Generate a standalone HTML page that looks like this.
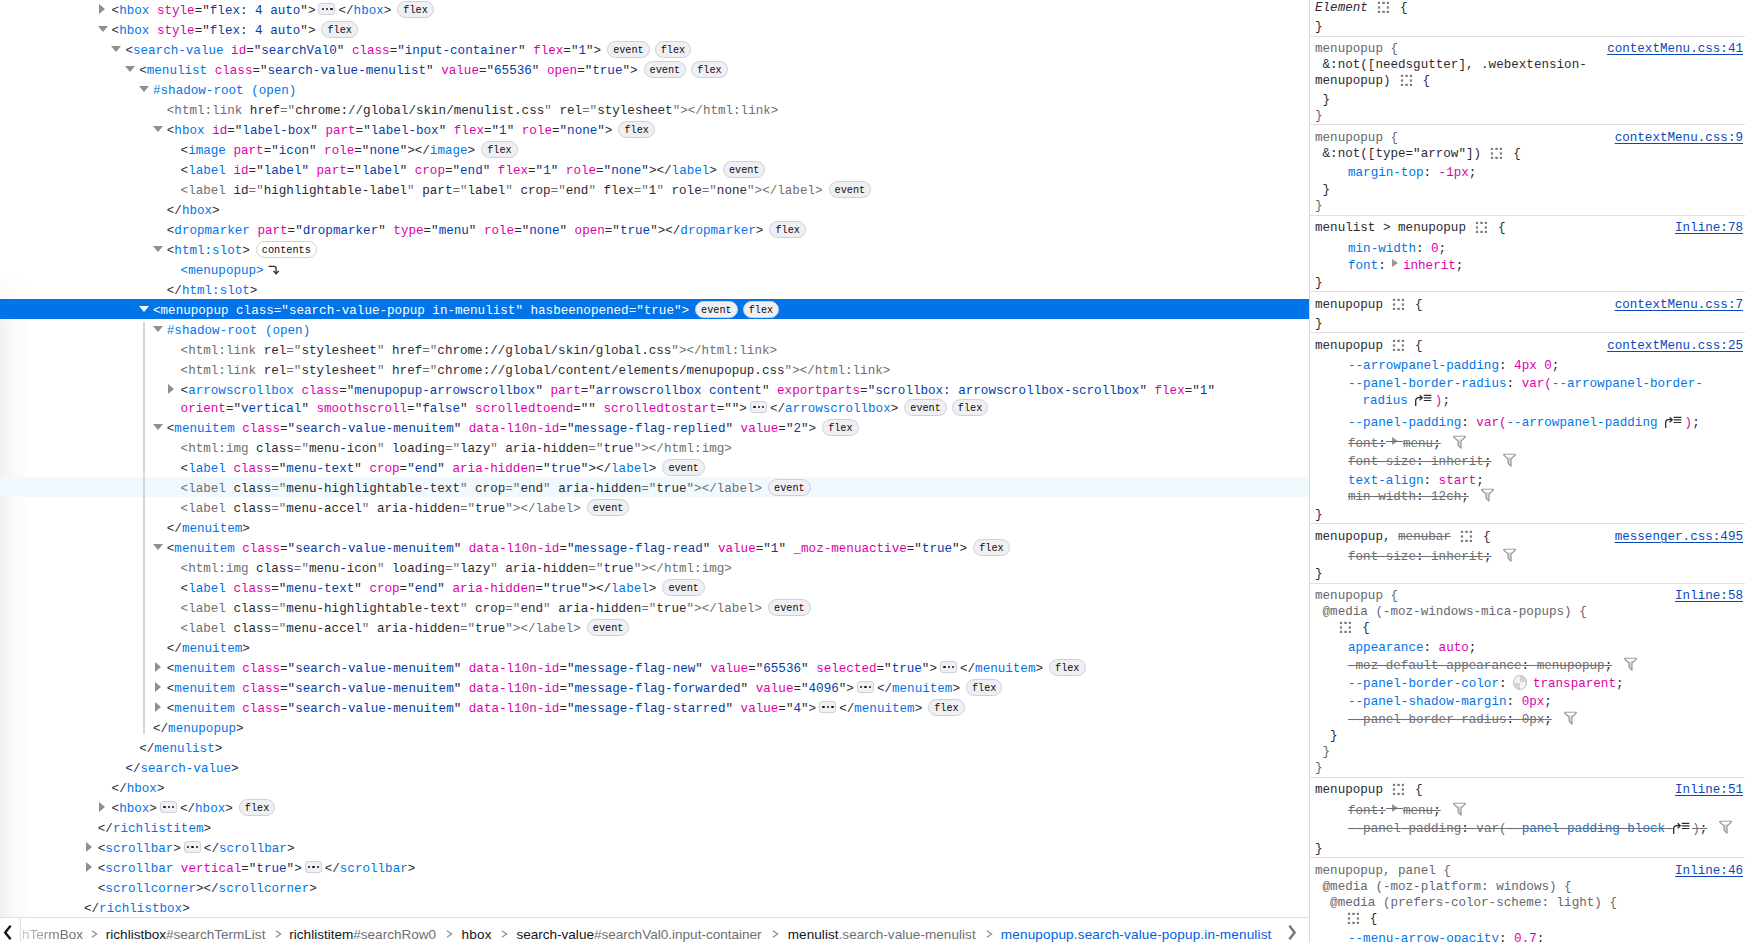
<!DOCTYPE html>
<html><head><meta charset="utf-8">
<style>
html,body{margin:0;padding:0;width:1745px;height:942px;overflow:hidden;background:#fff;}
body{position:relative;font-family:"Liberation Mono",monospace;font-size:12.59px;color:#15141a;}
#markup{position:absolute;left:0;top:0;width:1309px;height:917px;overflow:hidden;background:#fff;}
#markup .shade{position:absolute;left:0;top:270px;bottom:0;width:45px;background:linear-gradient(to right,rgba(0,0,0,0.06),rgba(0,0,0,0.025) 12px,rgba(0,0,0,0) 32px);-webkit-mask-image:linear-gradient(to bottom,transparent,#000 60px);pointer-events:none}
.row{position:absolute;left:0;width:1309px;white-space:pre;line-height:18px;}
.row .txt{position:absolute;top:3px;}
.row.sel{background:#0074e8;}
.row.hov{background:#f0f9fe;}
.p{color:#2b2a33}
.t{color:#0074e8}
.an{color:#dd00a9}
.av{color:#003eaa}
.nd .p,.nd .t{color:#6e6e73}
.nd .an,.nd .av{color:#2b2a33}
.sel .p,.sel .t,.sel .an,.sel .av{color:#fff}
.sr .t{color:#0074e8}
.bd{display:inline-block;vertical-align:top;margin-top:-1px;margin-left:6px;height:14.5px;line-height:18.5px;padding:0 5px;border:1px solid #cfcfd8;border-radius:9px;background:#f0f0f4;color:#0c0c0d;font-size:10.2px;}
.bd + .bd{margin-left:5px}
.bd.ct{background:#fff;}
.ell{display:inline-block;vertical-align:top;margin:1px 3px 0 3px;width:15px;height:10px;border:1px solid #cfcfd8;border-radius:3px;background:#f0f0f4;position:relative}
.ell i{position:absolute;top:3.8px;width:2.4px;height:2.4px;border-radius:50%;background:#15141a}
.ell i:nth-child(1){left:2.2px}.ell i:nth-child(2){left:6.6px}.ell i:nth-child(3){left:11px}
.tw{position:absolute;top:0;width:10px;height:20px}
.tw.d::before{content:"";position:absolute;left:0.2px;top:7.4px;border-left:5px solid transparent;border-right:5px solid transparent;border-top:6px solid #8f8f8f}
.tw.r::before{content:"";position:absolute;left:2.1px;top:5px;border-top:5px solid transparent;border-bottom:5px solid transparent;border-left:6.8px solid #8f8f8f}
.sel .tw.d::before{border-top-color:#fff}
.guide{position:absolute;left:143px;width:2px;background:#d7d7db}
#split{position:absolute;left:1309px;top:0;width:1px;height:942px;background:#d7d7db}
#crumbs{position:absolute;left:0;top:917px;width:1309px;height:24px;border-top:1px solid #e0e0e2;background:#fff;font-family:"Liberation Sans",sans-serif;font-size:13.55px;white-space:pre;overflow:hidden}
.ci{position:absolute;line-height:18px}
.ctag{color:#15141a}
.cid{color:#6e6e73}
.csel .ctag,.csel .cid{color:#0060df}
.csep{position:absolute;top:12.4px;width:7px;height:8px}
.csep svg,.cbtn svg{position:absolute;left:0;top:0}
.cbtn{position:absolute;top:-1px;width:20px;height:25px}
.cbl{position:absolute;left:20px;top:0;width:1px;height:24px;background:#e0e0e2}
.ci.fade{-webkit-mask-image:linear-gradient(to right,rgba(0,0,0,0.35),#000 40px)}
#rules{position:absolute;left:1310px;top:0;width:435px;height:942px;overflow:hidden;background:#fff}

.rl{position:absolute;white-space:pre;line-height:18px;color:#2b2a33}
.sep{position:absolute;left:0;width:435px;height:1px;background:#e0e0e2}
.lk{color:#0b48b8;text-decoration:underline;text-underline-offset:2px}
.el{font-style:italic}
.rl.anc{color:#66666e}
.slotarrow{display:inline-block;width:12px;height:10px;margin-left:-3.5px;vertical-align:-1px}
.slot .t{color:#0074e8}
.hl{display:inline-block;width:17px;height:12px;vertical-align:-2px;position:relative}
.hl svg{position:absolute;left:1.5px;top:0}
.pn{color:#0074e8}
.pv{color:#dd00a9}
.pc{color:#2b2a33}
.st{text-decoration:line-through;text-decoration-color:#6e6e73}
.st .sn{color:#6e6e73}
.st .sn.b{color:#0074e8}
.sts{color:#6e6e73;text-decoration:line-through}
.flt{display:inline-block;width:13px;height:14px;margin-left:12px;vertical-align:-2px;position:relative}
.flt svg{position:absolute;left:0;top:0}
.exp{display:inline-block;width:6px;height:9.6px;margin:0 5px 0 6.2px;vertical-align:0.5px;position:relative}
.st .exp::after{content:"";position:absolute;left:-6.2px;right:-5px;top:4.3px;height:1px;background:#6e6e73}
.exp::before{content:"";position:absolute;left:0;top:0;border-top:4.8px solid transparent;border-bottom:4.8px solid transparent;border-left:6px solid #949499}
.jmp{display:inline-block;width:19.5px;height:12px;position:relative}
.jmp svg{position:absolute;left:0;top:2px}
.sw{display:inline-block;box-sizing:border-box;width:14.5px;height:14.5px;border-radius:50%;margin:0 5.5px 0 6.4px;vertical-align:-2.5px;border:1px solid #bdbdc2;background:conic-gradient(#d4d4d8 0 25%,#f4f4f6 0 50%,#d4d4d8 0 75%,#f4f4f6 0)}
</style></head><body>
<div id="markup">
<div class="shade"></div>
<div class="row " style="top:-1px;height:20px"><span class="tw r" style="left:97.40px"></span><div class=txt style="left:111.60px"><span class=p>&lt;</span><span class=t>hbox</span> <span class=an>style</span><span class=p>="</span><span class=av>flex: 4 auto</span><span class=p>"</span><span class=p>&gt;</span><span class=ell><i></i><i></i><i></i></span><span class=p>&lt;/</span><span class=t>hbox</span><span class=p>&gt;</span><span class=bd>flex</span></div></div>
<div class="row " style="top:19px;height:20px"><span class="tw d" style="left:97.40px"></span><div class=txt style="left:111.60px"><span class=p>&lt;</span><span class=t>hbox</span> <span class=an>style</span><span class=p>="</span><span class=av>flex: 4 auto</span><span class=p>"</span><span class=p>&gt;</span><span class=bd>flex</span></div></div>
<div class="row " style="top:39px;height:20px"><span class="tw d" style="left:111.20px"></span><div class=txt style="left:125.40px"><span class=p>&lt;</span><span class=t>search-value</span> <span class=an>id</span><span class=p>="</span><span class=av>searchVal0</span><span class=p>"</span> <span class=an>class</span><span class=p>="</span><span class=av>input-container</span><span class=p>"</span> <span class=an>flex</span><span class=p>="</span><span class=av>1</span><span class=p>"</span><span class=p>&gt;</span><span class=bd>event</span><span class=bd>flex</span></div></div>
<div class="row " style="top:59px;height:20px"><span class="tw d" style="left:125.00px"></span><div class=txt style="left:139.20px"><span class=p>&lt;</span><span class=t>menulist</span> <span class=an>class</span><span class=p>="</span><span class=av>search-value-menulist</span><span class=p>"</span> <span class=an>value</span><span class=p>="</span><span class=av>65536</span><span class=p>"</span> <span class=an>open</span><span class=p>="</span><span class=av>true</span><span class=p>"</span><span class=p>&gt;</span><span class=bd>event</span><span class=bd>flex</span></div></div>
<div class="row sr" style="top:79px;height:20px"><span class="tw d" style="left:138.80px"></span><div class=txt style="left:153.00px"><span class=t>#shadow-root (open)</span></div></div>
<div class="row nd" style="top:99px;height:20px"><div class=txt style="left:166.80px"><span class=p>&lt;</span><span class=t>html:link</span> <span class=an>href</span><span class=p>="</span><span class=av>chrome://global/skin/menulist.css</span><span class=p>"</span> <span class=an>rel</span><span class=p>="</span><span class=av>stylesheet</span><span class=p>"</span><span class=p>&gt;</span><span class=p>&lt;/</span><span class=t>html:link</span><span class=p>&gt;</span></div></div>
<div class="row " style="top:119px;height:20px"><span class="tw d" style="left:152.60px"></span><div class=txt style="left:166.80px"><span class=p>&lt;</span><span class=t>hbox</span> <span class=an>id</span><span class=p>="</span><span class=av>label-box</span><span class=p>"</span> <span class=an>part</span><span class=p>="</span><span class=av>label-box</span><span class=p>"</span> <span class=an>flex</span><span class=p>="</span><span class=av>1</span><span class=p>"</span> <span class=an>role</span><span class=p>="</span><span class=av>none</span><span class=p>"</span><span class=p>&gt;</span><span class=bd>flex</span></div></div>
<div class="row " style="top:139px;height:20px"><div class=txt style="left:180.60px"><span class=p>&lt;</span><span class=t>image</span> <span class=an>part</span><span class=p>="</span><span class=av>icon</span><span class=p>"</span> <span class=an>role</span><span class=p>="</span><span class=av>none</span><span class=p>"</span><span class=p>&gt;</span><span class=p>&lt;/</span><span class=t>image</span><span class=p>&gt;</span><span class=bd>flex</span></div></div>
<div class="row " style="top:159px;height:20px"><div class=txt style="left:180.60px"><span class=p>&lt;</span><span class=t>label</span> <span class=an>id</span><span class=p>="</span><span class=av>label</span><span class=p>"</span> <span class=an>part</span><span class=p>="</span><span class=av>label</span><span class=p>"</span> <span class=an>crop</span><span class=p>="</span><span class=av>end</span><span class=p>"</span> <span class=an>flex</span><span class=p>="</span><span class=av>1</span><span class=p>"</span> <span class=an>role</span><span class=p>="</span><span class=av>none</span><span class=p>"</span><span class=p>&gt;</span><span class=p>&lt;/</span><span class=t>label</span><span class=p>&gt;</span><span class=bd>event</span></div></div>
<div class="row nd" style="top:179px;height:20px"><div class=txt style="left:180.60px"><span class=p>&lt;</span><span class=t>label</span> <span class=an>id</span><span class=p>="</span><span class=av>highlightable-label</span><span class=p>"</span> <span class=an>part</span><span class=p>="</span><span class=av>label</span><span class=p>"</span> <span class=an>crop</span><span class=p>="</span><span class=av>end</span><span class=p>"</span> <span class=an>flex</span><span class=p>="</span><span class=av>1</span><span class=p>"</span> <span class=an>role</span><span class=p>="</span><span class=av>none</span><span class=p>"</span><span class=p>&gt;</span><span class=p>&lt;/</span><span class=t>label</span><span class=p>&gt;</span><span class=bd>event</span></div></div>
<div class="row " style="top:199px;height:20px"><div class=txt style="left:166.80px"><span class=p>&lt;/</span><span class=t>hbox</span><span class=p>&gt;</span></div></div>
<div class="row " style="top:219px;height:20px"><div class=txt style="left:166.80px"><span class=p>&lt;</span><span class=t>dropmarker</span> <span class=an>part</span><span class=p>="</span><span class=av>dropmarker</span><span class=p>"</span> <span class=an>type</span><span class=p>="</span><span class=av>menu</span><span class=p>"</span> <span class=an>role</span><span class=p>="</span><span class=av>none</span><span class=p>"</span> <span class=an>open</span><span class=p>="</span><span class=av>true</span><span class=p>"</span><span class=p>&gt;</span><span class=p>&lt;/</span><span class=t>dropmarker</span><span class=p>&gt;</span><span class=bd>flex</span></div></div>
<div class="row " style="top:239px;height:20px"><span class="tw d" style="left:152.60px"></span><div class=txt style="left:166.80px"><span class=p>&lt;</span><span class=t>html:slot</span><span class=p>&gt;</span><span class="bd ct">contents</span></div></div>
<div class="row slot" style="top:259px;height:20px"><div class=txt style="left:180.60px"><span class=t>&lt;menupopup&gt;</span> <span class=slotarrow><svg width="12" height="10" viewBox="0 0 12 10"><path d="M0.6 1.3 H5.8 Q8.1 1.3 8.1 3.8 V8.6" fill="none" stroke="#2b2a33" stroke-width="1.3"/><path d="M5.4 5.9 L8.1 8.8 L10.8 5.9" fill="none" stroke="#2b2a33" stroke-width="1.3"/></svg></span></div></div>
<div class="row " style="top:279px;height:20px"><div class=txt style="left:166.80px"><span class=p>&lt;/</span><span class=t>html:slot</span><span class=p>&gt;</span></div></div>
<div class="row sel" style="top:299px;height:20px"><span class="tw d" style="left:138.80px"></span><div class=txt style="left:153.00px"><span class=p>&lt;</span><span class=t>menupopup</span> <span class=an>class</span><span class=p>="</span><span class=av>search-value-popup in-menulist</span><span class=p>"</span> <span class=an>hasbeenopened</span><span class=p>="</span><span class=av>true</span><span class=p>"</span><span class=p>&gt;</span><span class=bd>event</span><span class=bd>flex</span></div></div>
<div class="row sr" style="top:319px;height:20px"><span class="tw d" style="left:152.60px"></span><div class=txt style="left:166.80px"><span class=t>#shadow-root (open)</span></div></div>
<div class="row nd" style="top:339px;height:20px"><div class=txt style="left:180.60px"><span class=p>&lt;</span><span class=t>html:link</span> <span class=an>rel</span><span class=p>="</span><span class=av>stylesheet</span><span class=p>"</span> <span class=an>href</span><span class=p>="</span><span class=av>chrome://global/skin/global.css</span><span class=p>"</span><span class=p>&gt;</span><span class=p>&lt;/</span><span class=t>html:link</span><span class=p>&gt;</span></div></div>
<div class="row nd" style="top:359px;height:20px"><div class=txt style="left:180.60px"><span class=p>&lt;</span><span class=t>html:link</span> <span class=an>rel</span><span class=p>="</span><span class=av>stylesheet</span><span class=p>"</span> <span class=an>href</span><span class=p>="</span><span class=av>chrome://global/content/elements/menupopup.css</span><span class=p>"</span><span class=p>&gt;</span><span class=p>&lt;/</span><span class=t>html:link</span><span class=p>&gt;</span></div></div>
<div class="row wrap" style="top:379px;height:38px"><span class="tw r" style="left:166.40px"></span><div class=txt style="left:180.60px"><span class=p>&lt;</span><span class=t>arrowscrollbox</span> <span class=an>class</span><span class=p>="</span><span class=av>menupopup-arrowscrollbox</span><span class=p>"</span> <span class=an>part</span><span class=p>="</span><span class=av>arrowscrollbox content</span><span class=p>"</span> <span class=an>exportparts</span><span class=p>="</span><span class=av>scrollbox: arrowscrollbox-scrollbox</span><span class=p>"</span> <span class=an>flex</span><span class=p>="</span><span class=av>1</span><span class=p>"</span><br><span class=an>orient</span><span class=p>="</span><span class=av>vertical</span><span class=p>"</span> <span class=an>smoothscroll</span><span class=p>="</span><span class=av>false</span><span class=p>"</span> <span class=an>scrolledtoend</span><span class=p>="</span><span class=av></span><span class=p>"</span> <span class=an>scrolledtostart</span><span class=p>="</span><span class=av></span><span class=p>"</span><span class=p>&gt;</span><span class=ell><i></i><i></i><i></i></span><span class=p>&lt;/</span><span class=t>arrowscrollbox</span><span class=p>&gt;</span><span class=bd>event</span><span class=bd>flex</span></div></div>
<div class="row " style="top:417px;height:20px"><span class="tw d" style="left:152.60px"></span><div class=txt style="left:166.80px"><span class=p>&lt;</span><span class=t>menuitem</span> <span class=an>class</span><span class=p>="</span><span class=av>search-value-menuitem</span><span class=p>"</span> <span class=an>data-l10n-id</span><span class=p>="</span><span class=av>message-flag-replied</span><span class=p>"</span> <span class=an>value</span><span class=p>="</span><span class=av>2</span><span class=p>"</span><span class=p>&gt;</span><span class=bd>flex</span></div></div>
<div class="row nd" style="top:437px;height:20px"><div class=txt style="left:180.60px"><span class=p>&lt;</span><span class=t>html:img</span> <span class=an>class</span><span class=p>="</span><span class=av>menu-icon</span><span class=p>"</span> <span class=an>loading</span><span class=p>="</span><span class=av>lazy</span><span class=p>"</span> <span class=an>aria-hidden</span><span class=p>="</span><span class=av>true</span><span class=p>"</span><span class=p>&gt;</span><span class=p>&lt;/</span><span class=t>html:img</span><span class=p>&gt;</span></div></div>
<div class="row " style="top:457px;height:20px"><div class=txt style="left:180.60px"><span class=p>&lt;</span><span class=t>label</span> <span class=an>class</span><span class=p>="</span><span class=av>menu-text</span><span class=p>"</span> <span class=an>crop</span><span class=p>="</span><span class=av>end</span><span class=p>"</span> <span class=an>aria-hidden</span><span class=p>="</span><span class=av>true</span><span class=p>"</span><span class=p>&gt;</span><span class=p>&lt;/</span><span class=t>label</span><span class=p>&gt;</span><span class=bd>event</span></div></div>
<div class="row nd hov" style="top:477px;height:20px"><div class=txt style="left:180.60px"><span class=p>&lt;</span><span class=t>label</span> <span class=an>class</span><span class=p>="</span><span class=av>menu-highlightable-text</span><span class=p>"</span> <span class=an>crop</span><span class=p>="</span><span class=av>end</span><span class=p>"</span> <span class=an>aria-hidden</span><span class=p>="</span><span class=av>true</span><span class=p>"</span><span class=p>&gt;</span><span class=p>&lt;/</span><span class=t>label</span><span class=p>&gt;</span><span class=bd>event</span></div></div>
<div class="row nd" style="top:497px;height:20px"><div class=txt style="left:180.60px"><span class=p>&lt;</span><span class=t>label</span> <span class=an>class</span><span class=p>="</span><span class=av>menu-accel</span><span class=p>"</span> <span class=an>aria-hidden</span><span class=p>="</span><span class=av>true</span><span class=p>"</span><span class=p>&gt;</span><span class=p>&lt;/</span><span class=t>label</span><span class=p>&gt;</span><span class=bd>event</span></div></div>
<div class="row " style="top:517px;height:20px"><div class=txt style="left:166.80px"><span class=p>&lt;/</span><span class=t>menuitem</span><span class=p>&gt;</span></div></div>
<div class="row " style="top:537px;height:20px"><span class="tw d" style="left:152.60px"></span><div class=txt style="left:166.80px"><span class=p>&lt;</span><span class=t>menuitem</span> <span class=an>class</span><span class=p>="</span><span class=av>search-value-menuitem</span><span class=p>"</span> <span class=an>data-l10n-id</span><span class=p>="</span><span class=av>message-flag-read</span><span class=p>"</span> <span class=an>value</span><span class=p>="</span><span class=av>1</span><span class=p>"</span> <span class=an>_moz-menuactive</span><span class=p>="</span><span class=av>true</span><span class=p>"</span><span class=p>&gt;</span><span class=bd>flex</span></div></div>
<div class="row nd" style="top:557px;height:20px"><div class=txt style="left:180.60px"><span class=p>&lt;</span><span class=t>html:img</span> <span class=an>class</span><span class=p>="</span><span class=av>menu-icon</span><span class=p>"</span> <span class=an>loading</span><span class=p>="</span><span class=av>lazy</span><span class=p>"</span> <span class=an>aria-hidden</span><span class=p>="</span><span class=av>true</span><span class=p>"</span><span class=p>&gt;</span><span class=p>&lt;/</span><span class=t>html:img</span><span class=p>&gt;</span></div></div>
<div class="row " style="top:577px;height:20px"><div class=txt style="left:180.60px"><span class=p>&lt;</span><span class=t>label</span> <span class=an>class</span><span class=p>="</span><span class=av>menu-text</span><span class=p>"</span> <span class=an>crop</span><span class=p>="</span><span class=av>end</span><span class=p>"</span> <span class=an>aria-hidden</span><span class=p>="</span><span class=av>true</span><span class=p>"</span><span class=p>&gt;</span><span class=p>&lt;/</span><span class=t>label</span><span class=p>&gt;</span><span class=bd>event</span></div></div>
<div class="row nd" style="top:597px;height:20px"><div class=txt style="left:180.60px"><span class=p>&lt;</span><span class=t>label</span> <span class=an>class</span><span class=p>="</span><span class=av>menu-highlightable-text</span><span class=p>"</span> <span class=an>crop</span><span class=p>="</span><span class=av>end</span><span class=p>"</span> <span class=an>aria-hidden</span><span class=p>="</span><span class=av>true</span><span class=p>"</span><span class=p>&gt;</span><span class=p>&lt;/</span><span class=t>label</span><span class=p>&gt;</span><span class=bd>event</span></div></div>
<div class="row nd" style="top:617px;height:20px"><div class=txt style="left:180.60px"><span class=p>&lt;</span><span class=t>label</span> <span class=an>class</span><span class=p>="</span><span class=av>menu-accel</span><span class=p>"</span> <span class=an>aria-hidden</span><span class=p>="</span><span class=av>true</span><span class=p>"</span><span class=p>&gt;</span><span class=p>&lt;/</span><span class=t>label</span><span class=p>&gt;</span><span class=bd>event</span></div></div>
<div class="row " style="top:637px;height:20px"><div class=txt style="left:166.80px"><span class=p>&lt;/</span><span class=t>menuitem</span><span class=p>&gt;</span></div></div>
<div class="row " style="top:657px;height:20px"><span class="tw r" style="left:152.60px"></span><div class=txt style="left:166.80px"><span class=p>&lt;</span><span class=t>menuitem</span> <span class=an>class</span><span class=p>="</span><span class=av>search-value-menuitem</span><span class=p>"</span> <span class=an>data-l10n-id</span><span class=p>="</span><span class=av>message-flag-new</span><span class=p>"</span> <span class=an>value</span><span class=p>="</span><span class=av>65536</span><span class=p>"</span> <span class=an>selected</span><span class=p>="</span><span class=av>true</span><span class=p>"</span><span class=p>&gt;</span><span class=ell><i></i><i></i><i></i></span><span class=p>&lt;/</span><span class=t>menuitem</span><span class=p>&gt;</span><span class=bd>flex</span></div></div>
<div class="row " style="top:677px;height:20px"><span class="tw r" style="left:152.60px"></span><div class=txt style="left:166.80px"><span class=p>&lt;</span><span class=t>menuitem</span> <span class=an>class</span><span class=p>="</span><span class=av>search-value-menuitem</span><span class=p>"</span> <span class=an>data-l10n-id</span><span class=p>="</span><span class=av>message-flag-forwarded</span><span class=p>"</span> <span class=an>value</span><span class=p>="</span><span class=av>4096</span><span class=p>"</span><span class=p>&gt;</span><span class=ell><i></i><i></i><i></i></span><span class=p>&lt;/</span><span class=t>menuitem</span><span class=p>&gt;</span><span class=bd>flex</span></div></div>
<div class="row " style="top:697px;height:20px"><span class="tw r" style="left:152.60px"></span><div class=txt style="left:166.80px"><span class=p>&lt;</span><span class=t>menuitem</span> <span class=an>class</span><span class=p>="</span><span class=av>search-value-menuitem</span><span class=p>"</span> <span class=an>data-l10n-id</span><span class=p>="</span><span class=av>message-flag-starred</span><span class=p>"</span> <span class=an>value</span><span class=p>="</span><span class=av>4</span><span class=p>"</span><span class=p>&gt;</span><span class=ell><i></i><i></i><i></i></span><span class=p>&lt;/</span><span class=t>menuitem</span><span class=p>&gt;</span><span class=bd>flex</span></div></div>
<div class="row " style="top:717px;height:20px"><div class=txt style="left:153.00px"><span class=p>&lt;/</span><span class=t>menupopup</span><span class=p>&gt;</span></div></div>
<div class="row " style="top:737px;height:20px"><div class=txt style="left:139.20px"><span class=p>&lt;/</span><span class=t>menulist</span><span class=p>&gt;</span></div></div>
<div class="row " style="top:757px;height:20px"><div class=txt style="left:125.40px"><span class=p>&lt;/</span><span class=t>search-value</span><span class=p>&gt;</span></div></div>
<div class="row " style="top:777px;height:20px"><div class=txt style="left:111.60px"><span class=p>&lt;/</span><span class=t>hbox</span><span class=p>&gt;</span></div></div>
<div class="row " style="top:797px;height:20px"><span class="tw r" style="left:97.40px"></span><div class=txt style="left:111.60px"><span class=p>&lt;</span><span class=t>hbox</span><span class=p>&gt;</span><span class=ell><i></i><i></i><i></i></span><span class=p>&lt;/</span><span class=t>hbox</span><span class=p>&gt;</span><span class=bd>flex</span></div></div>
<div class="row " style="top:817px;height:20px"><div class=txt style="left:97.80px"><span class=p>&lt;/</span><span class=t>richlistitem</span><span class=p>&gt;</span></div></div>
<div class="row " style="top:837px;height:20px"><span class="tw r" style="left:83.60px"></span><div class=txt style="left:97.80px"><span class=p>&lt;</span><span class=t>scrollbar</span><span class=p>&gt;</span><span class=ell><i></i><i></i><i></i></span><span class=p>&lt;/</span><span class=t>scrollbar</span><span class=p>&gt;</span></div></div>
<div class="row " style="top:857px;height:20px"><span class="tw r" style="left:83.60px"></span><div class=txt style="left:97.80px"><span class=p>&lt;</span><span class=t>scrollbar</span> <span class=an>vertical</span><span class=p>="</span><span class=av>true</span><span class=p>"</span><span class=p>&gt;</span><span class=ell><i></i><i></i><i></i></span><span class=p>&lt;/</span><span class=t>scrollbar</span><span class=p>&gt;</span></div></div>
<div class="row " style="top:877px;height:20px"><div class=txt style="left:97.80px"><span class=p>&lt;</span><span class=t>scrollcorner</span><span class=p>&gt;</span><span class=p>&lt;/</span><span class=t>scrollcorner</span><span class=p>&gt;</span></div></div>
<div class="row " style="top:897px;height:20px"><div class=txt style="left:84.00px"><span class=p>&lt;/</span><span class=t>richlistbox</span><span class=p>&gt;</span></div></div>
<div class="guide" style="top:322px;height:412px"></div>
</div>
<div id="split"></div>
<div id="rules">
<div class="rl " style="top:-1.0px;left:5.00px"><i class=el>Element</i> <span class=hl><svg width="12" height="12" viewBox="0 0 12 12"><g fill="#7b7b80"><rect x="0.9" y="0.8" width="2.2" height="2.2"/><rect x="5.3" y="0.8" width="2.5" height="2.2"/><rect x="9.8" y="0.8" width="2.2" height="2.2"/><rect x="0.9" y="5.4" width="2.2" height="2.2"/><rect x="9.8" y="5.4" width="2.2" height="2.2"/><rect x="0.9" y="9.8" width="2.2" height="2.2"/><rect x="5.3" y="9.8" width="2.5" height="2.2"/><rect x="9.8" y="9.8" width="2.2" height="2.2"/></g></svg></span> {</div>
<div class="rl " style="top:18.0px;left:5.00px">}</div>
<div class="sep" style="top:36px"></div>
<div class="rl anc" style="top:40.0px;left:5.00px">menupopup {</div>
<div class="rl lk" style="top:40.0px;right:2px">contextMenu.css:41</div>
<div class="rl " style="top:56.0px;left:12.55px">&amp;:not([needsgutter], .webextension-</div>
<div class="rl " style="top:72.0px;left:5.00px">menupopup) <span class=hl><svg width="12" height="12" viewBox="0 0 12 12"><g fill="#7b7b80"><rect x="0.9" y="0.8" width="2.2" height="2.2"/><rect x="5.3" y="0.8" width="2.5" height="2.2"/><rect x="9.8" y="0.8" width="2.2" height="2.2"/><rect x="0.9" y="5.4" width="2.2" height="2.2"/><rect x="9.8" y="5.4" width="2.2" height="2.2"/><rect x="0.9" y="9.8" width="2.2" height="2.2"/><rect x="5.3" y="9.8" width="2.5" height="2.2"/><rect x="9.8" y="9.8" width="2.2" height="2.2"/></g></svg></span> {</div>
<div class="rl " style="top:91.0px;left:12.55px">}</div>
<div class="rl anc" style="top:107.0px;left:5.00px">}</div>
<div class="sep" style="top:124px"></div>
<div class="rl anc" style="top:129.0px;left:5.00px">menupopup {</div>
<div class="rl lk" style="top:129.0px;right:2px">contextMenu.css:9</div>
<div class="rl " style="top:145.0px;left:12.55px">&amp;:not([type="arrow"]) <span class=hl><svg width="12" height="12" viewBox="0 0 12 12"><g fill="#7b7b80"><rect x="0.9" y="0.8" width="2.2" height="2.2"/><rect x="5.3" y="0.8" width="2.5" height="2.2"/><rect x="9.8" y="0.8" width="2.2" height="2.2"/><rect x="0.9" y="5.4" width="2.2" height="2.2"/><rect x="9.8" y="5.4" width="2.2" height="2.2"/><rect x="0.9" y="9.8" width="2.2" height="2.2"/><rect x="5.3" y="9.8" width="2.5" height="2.2"/><rect x="9.8" y="9.8" width="2.2" height="2.2"/></g></svg></span> {</div>
<div class="rl " style="top:164.0px;left:38.00px"><span class=pn>margin-top</span><span class=pc>: </span><span class=pv>-1px</span><span class=pc>;</span></div>
<div class="rl " style="top:181.0px;left:12.55px">}</div>
<div class="rl anc" style="top:197.0px;left:5.00px">}</div>
<div class="sep" style="top:215px"></div>
<div class="rl " style="top:219.0px;left:5.00px">menulist &gt; menupopup <span class=hl><svg width="12" height="12" viewBox="0 0 12 12"><g fill="#7b7b80"><rect x="0.9" y="0.8" width="2.2" height="2.2"/><rect x="5.3" y="0.8" width="2.5" height="2.2"/><rect x="9.8" y="0.8" width="2.2" height="2.2"/><rect x="0.9" y="5.4" width="2.2" height="2.2"/><rect x="9.8" y="5.4" width="2.2" height="2.2"/><rect x="0.9" y="9.8" width="2.2" height="2.2"/><rect x="5.3" y="9.8" width="2.5" height="2.2"/><rect x="9.8" y="9.8" width="2.2" height="2.2"/></g></svg></span> {</div>
<div class="rl lk" style="top:219.0px;right:2px">Inline:78</div>
<div class="rl " style="top:240.0px;left:38.00px"><span class=pn>min-width</span><span class=pc>: </span><span class=pv>0</span><span class=pc>;</span></div>
<div class="rl " style="top:257.0px;left:38.00px"><span class=pn>font</span><span class=pc>:</span><span class=exp></span><span class=pv>inherit</span><span class=pc>;</span></div>
<div class="rl " style="top:274.0px;left:5.00px">}</div>
<div class="sep" style="top:291px"></div>
<div class="rl " style="top:296.0px;left:5.00px">menupopup <span class=hl><svg width="12" height="12" viewBox="0 0 12 12"><g fill="#7b7b80"><rect x="0.9" y="0.8" width="2.2" height="2.2"/><rect x="5.3" y="0.8" width="2.5" height="2.2"/><rect x="9.8" y="0.8" width="2.2" height="2.2"/><rect x="0.9" y="5.4" width="2.2" height="2.2"/><rect x="9.8" y="5.4" width="2.2" height="2.2"/><rect x="0.9" y="9.8" width="2.2" height="2.2"/><rect x="5.3" y="9.8" width="2.5" height="2.2"/><rect x="9.8" y="9.8" width="2.2" height="2.2"/></g></svg></span> {</div>
<div class="rl lk" style="top:296.0px;right:2px">contextMenu.css:7</div>
<div class="rl " style="top:315.0px;left:5.00px">}</div>
<div class="sep" style="top:332px"></div>
<div class="rl " style="top:337.0px;left:5.00px">menupopup <span class=hl><svg width="12" height="12" viewBox="0 0 12 12"><g fill="#7b7b80"><rect x="0.9" y="0.8" width="2.2" height="2.2"/><rect x="5.3" y="0.8" width="2.5" height="2.2"/><rect x="9.8" y="0.8" width="2.2" height="2.2"/><rect x="0.9" y="5.4" width="2.2" height="2.2"/><rect x="9.8" y="5.4" width="2.2" height="2.2"/><rect x="0.9" y="9.8" width="2.2" height="2.2"/><rect x="5.3" y="9.8" width="2.5" height="2.2"/><rect x="9.8" y="9.8" width="2.2" height="2.2"/></g></svg></span> {</div>
<div class="rl lk" style="top:337.0px;right:2px">contextMenu.css:25</div>
<div class="rl " style="top:357.0px;left:38.00px"><span class=pn>--arrowpanel-padding</span><span class=pc>: </span><span class=pv>4px 0</span><span class=pc>;</span></div>
<div class="rl " style="top:375.0px;left:38.00px"><span class=pn>--panel-border-radius</span><span class=pc>: </span><span class=pv>var(</span><span class=pn>--arrowpanel-border-</span></div>
<div class="rl " style="top:392.0px;left:52.50px"><span class=pn>radius</span> <span class=jmp><svg width="19" height="13" viewBox="0 0 19 13"><path d="M0.7 12 V6.8 Q0.7 3.7 3.8 3.7 H7" fill="none" stroke="#2b2a33" stroke-width="1.3"/><path d="M4.7 1.2 L7.2 3.7 L4.7 6.2" fill="none" stroke="#2b2a33" stroke-width="1.3"/><path d="M8.7 1.3 H16.3 M8.7 3.9 H16.3 M8.7 6.5 H16.3" stroke="#2b2a33" stroke-width="1.2"/></svg></span><span class=pv>)</span><span class=pc>;</span></div>
<div class="rl " style="top:414.0px;left:38.00px"><span class=pn>--panel-padding</span><span class=pc>: </span><span class=pv>var(</span><span class=pn>--arrowpanel-padding</span> <span class=jmp><svg width="19" height="13" viewBox="0 0 19 13"><path d="M0.7 12 V6.8 Q0.7 3.7 3.8 3.7 H7" fill="none" stroke="#2b2a33" stroke-width="1.3"/><path d="M4.7 1.2 L7.2 3.7 L4.7 6.2" fill="none" stroke="#2b2a33" stroke-width="1.3"/><path d="M8.7 1.3 H16.3 M8.7 3.9 H16.3 M8.7 6.5 H16.3" stroke="#2b2a33" stroke-width="1.2"/></svg></span><span class=pv>)</span><span class=pc>;</span></div>
<div class="rl " style="top:435.0px;left:38.00px"><span class=st><span class=sn>font</span><span class=pc>:</span><span class=exp></span><span class=sn>menu</span><span class=pc>;</span></span><span class=flt><svg width="13" height="14" viewBox="0 0 13 14"><path d="M0.8 1.2 L12.2 1.2 L12.2 2.2 L8 6.2 L8 13.2 L5.2 10.4 L5 6.2 L0.8 2.2 Z" fill="#d8d8da" stroke="#8f8f94" stroke-width="1.1" stroke-linejoin="round"/><path d="M1.5 1.8 L11.5 1.8 L8.5 4.2 L4.5 4.2 Z" fill="#fff"/></svg></span></div>
<div class="rl " style="top:452.5px;left:38.00px"><span class=st><span class=sn>font-size</span><span class=pc>: </span><span class=sn>inherit</span><span class=pc>;</span></span><span class=flt><svg width="13" height="14" viewBox="0 0 13 14"><path d="M0.8 1.2 L12.2 1.2 L12.2 2.2 L8 6.2 L8 13.2 L5.2 10.4 L5 6.2 L0.8 2.2 Z" fill="#d8d8da" stroke="#8f8f94" stroke-width="1.1" stroke-linejoin="round"/><path d="M1.5 1.8 L11.5 1.8 L8.5 4.2 L4.5 4.2 Z" fill="#fff"/></svg></span></div>
<div class="rl " style="top:471.5px;left:38.00px"><span class=pn>text-align</span><span class=pc>: </span><span class=pv>start</span><span class=pc>;</span></div>
<div class="rl " style="top:488.0px;left:38.00px"><span class=st><span class=sn>min-width</span><span class=pc>: </span><span class=sn>12ch</span><span class=pc>;</span></span><span class=flt><svg width="13" height="14" viewBox="0 0 13 14"><path d="M0.8 1.2 L12.2 1.2 L12.2 2.2 L8 6.2 L8 13.2 L5.2 10.4 L5 6.2 L0.8 2.2 Z" fill="#d8d8da" stroke="#8f8f94" stroke-width="1.1" stroke-linejoin="round"/><path d="M1.5 1.8 L11.5 1.8 L8.5 4.2 L4.5 4.2 Z" fill="#fff"/></svg></span></div>
<div class="rl " style="top:506.0px;left:5.00px">}</div>
<div class="sep" style="top:523px"></div>
<div class="rl " style="top:528.0px;left:5.00px">menupopup, <span class=sts>menubar</span> <span class=hl><svg width="12" height="12" viewBox="0 0 12 12"><g fill="#7b7b80"><rect x="0.9" y="0.8" width="2.2" height="2.2"/><rect x="5.3" y="0.8" width="2.5" height="2.2"/><rect x="9.8" y="0.8" width="2.2" height="2.2"/><rect x="0.9" y="5.4" width="2.2" height="2.2"/><rect x="9.8" y="5.4" width="2.2" height="2.2"/><rect x="0.9" y="9.8" width="2.2" height="2.2"/><rect x="5.3" y="9.8" width="2.5" height="2.2"/><rect x="9.8" y="9.8" width="2.2" height="2.2"/></g></svg></span> {</div>
<div class="rl lk" style="top:528.0px;right:2px">messenger.css:495</div>
<div class="rl " style="top:548.0px;left:38.00px"><span class=st><span class=sn>font-size</span><span class=pc>: </span><span class=sn>inherit</span><span class=pc>;</span></span><span class=flt><svg width="13" height="14" viewBox="0 0 13 14"><path d="M0.8 1.2 L12.2 1.2 L12.2 2.2 L8 6.2 L8 13.2 L5.2 10.4 L5 6.2 L0.8 2.2 Z" fill="#d8d8da" stroke="#8f8f94" stroke-width="1.1" stroke-linejoin="round"/><path d="M1.5 1.8 L11.5 1.8 L8.5 4.2 L4.5 4.2 Z" fill="#fff"/></svg></span></div>
<div class="rl " style="top:565.0px;left:5.00px">}</div>
<div class="sep" style="top:583px"></div>
<div class="rl anc" style="top:587.0px;left:5.00px">menupopup {</div>
<div class="rl lk" style="top:587.0px;right:2px">Inline:58</div>
<div class="rl anc" style="top:603.0px;left:12.55px">@media (-moz-windows-mica-popups) {</div>
<div class="rl " style="top:619.0px;left:27.66px"><span class=hl><svg width="12" height="12" viewBox="0 0 12 12"><g fill="#7b7b80"><rect x="0.9" y="0.8" width="2.2" height="2.2"/><rect x="5.3" y="0.8" width="2.5" height="2.2"/><rect x="9.8" y="0.8" width="2.2" height="2.2"/><rect x="0.9" y="5.4" width="2.2" height="2.2"/><rect x="9.8" y="5.4" width="2.2" height="2.2"/><rect x="0.9" y="9.8" width="2.2" height="2.2"/><rect x="5.3" y="9.8" width="2.5" height="2.2"/><rect x="9.8" y="9.8" width="2.2" height="2.2"/></g></svg></span> {</div>
<div class="rl " style="top:638.5px;left:38.00px"><span class=pn>appearance</span><span class=pc>: </span><span class=pv>auto</span><span class=pc>;</span></div>
<div class="rl " style="top:656.5px;left:38.00px"><span class=st><span class=sn>-moz-default-appearance</span><span class=pc>: </span><span class=sn>menupopup</span><span class=pc>;</span></span><span class=flt><svg width="13" height="14" viewBox="0 0 13 14"><path d="M0.8 1.2 L12.2 1.2 L12.2 2.2 L8 6.2 L8 13.2 L5.2 10.4 L5 6.2 L0.8 2.2 Z" fill="#d8d8da" stroke="#8f8f94" stroke-width="1.1" stroke-linejoin="round"/><path d="M1.5 1.8 L11.5 1.8 L8.5 4.2 L4.5 4.2 Z" fill="#fff"/></svg></span></div>
<div class="rl " style="top:675.0px;left:38.00px"><span class=pn>--panel-border-color</span><span class=pc>:</span><span class=sw></span><span class=pv>transparent</span><span class=pc>;</span></div>
<div class="rl " style="top:693.0px;left:38.00px"><span class=pn>--panel-shadow-margin</span><span class=pc>: </span><span class=pv>0px</span><span class=pc>;</span></div>
<div class="rl " style="top:710.5px;left:38.00px"><span class=st><span class=sn>--panel-border-radius</span><span class=pc>: </span><span class=sn>0px</span><span class=pc>;</span></span><span class=flt><svg width="13" height="14" viewBox="0 0 13 14"><path d="M0.8 1.2 L12.2 1.2 L12.2 2.2 L8 6.2 L8 13.2 L5.2 10.4 L5 6.2 L0.8 2.2 Z" fill="#d8d8da" stroke="#8f8f94" stroke-width="1.1" stroke-linejoin="round"/><path d="M1.5 1.8 L11.5 1.8 L8.5 4.2 L4.5 4.2 Z" fill="#fff"/></svg></span></div>
<div class="rl " style="top:727.0px;left:20.11px">}</div>
<div class="rl anc" style="top:743.0px;left:12.55px">}</div>
<div class="rl anc" style="top:759.0px;left:5.00px">}</div>
<div class="sep" style="top:777px"></div>
<div class="rl " style="top:781.0px;left:5.00px">menupopup <span class=hl><svg width="12" height="12" viewBox="0 0 12 12"><g fill="#7b7b80"><rect x="0.9" y="0.8" width="2.2" height="2.2"/><rect x="5.3" y="0.8" width="2.5" height="2.2"/><rect x="9.8" y="0.8" width="2.2" height="2.2"/><rect x="0.9" y="5.4" width="2.2" height="2.2"/><rect x="9.8" y="5.4" width="2.2" height="2.2"/><rect x="0.9" y="9.8" width="2.2" height="2.2"/><rect x="5.3" y="9.8" width="2.5" height="2.2"/><rect x="9.8" y="9.8" width="2.2" height="2.2"/></g></svg></span> {</div>
<div class="rl lk" style="top:781.0px;right:2px">Inline:51</div>
<div class="rl " style="top:802.0px;left:38.00px"><span class=st><span class=sn>font</span><span class=pc>:</span><span class=exp></span><span class=sn>menu</span><span class=pc>;</span></span><span class=flt><svg width="13" height="14" viewBox="0 0 13 14"><path d="M0.8 1.2 L12.2 1.2 L12.2 2.2 L8 6.2 L8 13.2 L5.2 10.4 L5 6.2 L0.8 2.2 Z" fill="#d8d8da" stroke="#8f8f94" stroke-width="1.1" stroke-linejoin="round"/><path d="M1.5 1.8 L11.5 1.8 L8.5 4.2 L4.5 4.2 Z" fill="#fff"/></svg></span></div>
<div class="rl " style="top:819.5px;left:38.00px"><span class=st><span class=sn>--panel-padding</span><span class=pc>: </span><span class=sn>var(</span><span class="sn b">--panel-padding-block</span> <span class=jmp><svg width="19" height="13" viewBox="0 0 19 13"><path d="M0.7 12 V6.8 Q0.7 3.7 3.8 3.7 H7" fill="none" stroke="#2b2a33" stroke-width="1.3"/><path d="M4.7 1.2 L7.2 3.7 L4.7 6.2" fill="none" stroke="#2b2a33" stroke-width="1.3"/><path d="M8.7 1.3 H16.3 M8.7 3.9 H16.3 M8.7 6.5 H16.3" stroke="#2b2a33" stroke-width="1.2"/></svg></span><span class=sn>)</span><span class=pc>;</span></span><span class=flt><svg width="13" height="14" viewBox="0 0 13 14"><path d="M0.8 1.2 L12.2 1.2 L12.2 2.2 L8 6.2 L8 13.2 L5.2 10.4 L5 6.2 L0.8 2.2 Z" fill="#d8d8da" stroke="#8f8f94" stroke-width="1.1" stroke-linejoin="round"/><path d="M1.5 1.8 L11.5 1.8 L8.5 4.2 L4.5 4.2 Z" fill="#fff"/></svg></span></div>
<div class="rl " style="top:840.0px;left:5.00px">}</div>
<div class="sep" style="top:857px"></div>
<div class="rl anc" style="top:862.0px;left:5.00px">menupopup, panel {</div>
<div class="rl lk" style="top:862.0px;right:2px">Inline:46</div>
<div class="rl anc" style="top:878.0px;left:12.55px">@media (-moz-platform: windows) {</div>
<div class="rl anc" style="top:894.0px;left:20.11px">@media (prefers-color-scheme: light) {</div>
<div class="rl " style="top:910.0px;left:35.22px"><span class=hl><svg width="12" height="12" viewBox="0 0 12 12"><g fill="#7b7b80"><rect x="0.9" y="0.8" width="2.2" height="2.2"/><rect x="5.3" y="0.8" width="2.5" height="2.2"/><rect x="9.8" y="0.8" width="2.2" height="2.2"/><rect x="0.9" y="5.4" width="2.2" height="2.2"/><rect x="9.8" y="5.4" width="2.2" height="2.2"/><rect x="0.9" y="9.8" width="2.2" height="2.2"/><rect x="5.3" y="9.8" width="2.5" height="2.2"/><rect x="9.8" y="9.8" width="2.2" height="2.2"/></g></svg></span> {</div>
<div class="rl " style="top:930.0px;left:38.00px"><span class=pn>--menu-arrow-opacity</span><span class=pc>: </span><span class=pv>0.7</span><span class=pc>;</span></div>
</div>
<div id="crumbs">
<div class=cbtn style="left:0"><svg width="20" height="24" viewBox="0 0 20 24"><path d="M10.6 8.8 L5.2 15.5 L10.6 22.2" fill="none" stroke="#15141a" stroke-width="2.4"/></svg></div>
<div class=cbl></div>
<div class="ci fade" style="left:22px;top:7.5px"><span class=cid>hTermBox</span></div>
<div class="ci" style="left:105.8px;top:7.5px;letter-spacing:0.00px"><span class=ctag>richlistbox</span><span class=cid>#searchTermList</span></div>
<div class="ci" style="left:289.3px;top:7.5px;letter-spacing:0.00px"><span class=ctag>richlistitem</span><span class=cid>#searchRow0</span></div>
<div class="ci" style="left:461.6px;top:7.5px;letter-spacing:0.20px"><span class=ctag>hbox</span><span class=cid></span></div>
<div class="ci" style="left:516.4px;top:7.5px;letter-spacing:0.00px"><span class=ctag>search-value</span><span class=cid>#searchVal0.input-container</span></div>
<div class="ci" style="left:787.8px;top:7.5px;letter-spacing:0.04px"><span class=ctag>menulist</span><span class=cid>.search-value-menulist</span></div>
<div class="ci csel" style="left:1000.8px;top:7.5px;letter-spacing:0.16px"><span class=ctag>menupopup</span><span class=cid>.search-value-popup.in-menulist</span></div>
<div class=csep style="left:90.6px"><svg width="7" height="8" viewBox="0 0 7 8"><path d="M1 0.8 L5.6 4 L1 7.2" fill="none" stroke="#8f8f94" stroke-width="1.3"/></svg></div>
<div class=csep style="left:274.6px"><svg width="7" height="8" viewBox="0 0 7 8"><path d="M1 0.8 L5.6 4 L1 7.2" fill="none" stroke="#8f8f94" stroke-width="1.3"/></svg></div>
<div class=csep style="left:446.4px"><svg width="7" height="8" viewBox="0 0 7 8"><path d="M1 0.8 L5.6 4 L1 7.2" fill="none" stroke="#8f8f94" stroke-width="1.3"/></svg></div>
<div class=csep style="left:501.4px"><svg width="7" height="8" viewBox="0 0 7 8"><path d="M1 0.8 L5.6 4 L1 7.2" fill="none" stroke="#8f8f94" stroke-width="1.3"/></svg></div>
<div class=csep style="left:772.3px"><svg width="7" height="8" viewBox="0 0 7 8"><path d="M1 0.8 L5.6 4 L1 7.2" fill="none" stroke="#8f8f94" stroke-width="1.3"/></svg></div>
<div class=csep style="left:986.2px"><svg width="7" height="8" viewBox="0 0 7 8"><path d="M1 0.8 L5.6 4 L1 7.2" fill="none" stroke="#8f8f94" stroke-width="1.3"/></svg></div>
<div class=cbtn style="left:1283px"><svg width="20" height="24" viewBox="0 0 20 24"><path d="M6.4 8.8 L11.6 15.5 L6.4 22.2" fill="none" stroke="#737378" stroke-width="2.4"/></svg></div>
</div>
</body></html>
